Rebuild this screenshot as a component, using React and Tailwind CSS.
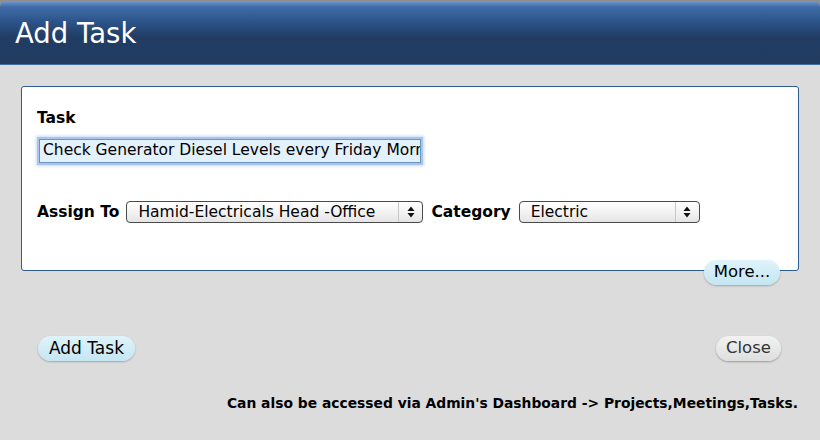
import React from 'react';

const Arrows = () => (
  <svg width="8" height="12" viewBox="0 0 8 12" className="block">
    <path d="M4 0.5 L7.5 5 L0.5 5 Z" fill="#111" />
    <path d="M4 11.5 L7.5 7 L0.5 7 Z" fill="#111" />
  </svg>
);

const FakeSelect = ({ value, width }) => (
  <div
    className={`flex items-center h-[22px] ${width} rounded-[4px] border border-[#4a4a4a] bg-[linear-gradient(#ffffff,#f3f3f3_50%,#e4e4e4)] text-[15.5px] text-black`}
  >
    <span className="flex-1 pl-[11px] leading-[20px] whitespace-nowrap overflow-hidden">{value}</span>
    <span className="flex items-center justify-center h-full w-[24px] border-l border-[#c8c8c8]">
      <Arrows />
    </span>
  </div>
);

export default function App() {
  return (
    <div className="w-[820px] h-[440px] bg-[#dcdcdc] font-['DejaVu_Sans',sans-serif] overflow-hidden">
      {/* Title bar */}
      <div className="bg-[#8f8f8f] pt-[1px]">
        <div className="h-[64px] rounded-t-[6px] border-b border-[#3e6da6] bg-[linear-gradient(#6f9ad2_0px,#3f6ba6_6px,#2c558b_20px,#223d64_36px,#213b61_64px)] flex items-center pl-[15px]">
          <h1 className="text-[27.5px] text-white leading-none pt-[3px]">Add Task</h1>
        </div>
      </div>

      {/* Form panel */}
      <div className="ml-[21px] mt-[21px] w-[778px] h-[185px] bg-white border border-[#2d5e93] rounded-[3px] pl-[15px] pt-[24px]">
        <div className="text-[15.5px] font-bold text-black leading-none">Task</div>
        <div className="mt-[12px] ml-[2px] w-[382px] h-[24px] border border-[#6b93c4] bg-[#e3f1fc] shadow-[0_0_0_2px_#a9c6ea,0_0_3px_3px_#c6daf2] flex items-center overflow-hidden">
          <input
            readOnly
            value="Check Generator Diesel Levels every Friday Morning"
            className="w-full bg-transparent outline-none text-[15.5px] text-black pl-[3px] leading-normal font-['DejaVu_Sans',sans-serif]"
          />
        </div>

        <div className="mt-[38px] flex items-center">
          <span className="text-[15.5px] font-bold text-black">Assign To</span>
          <span className="ml-[7px]">
            <FakeSelect value="Hamid-Electricals Head -Office" width="w-[297px]" />
          </span>
          <span className="text-[15.5px] font-bold text-black ml-[8px]">Category</span>
          <span className="ml-[8px]">
            <FakeSelect value="Electric" width="w-[181px]" />
          </span>
        </div>
      </div>

      {/* More button */}
      <div className="flex justify-end pr-[40px] -mt-[11px]">
        <button className="h-[25px] w-[76px] rounded-full bg-[linear-gradient(#dff3fa,#c4e6f2)] shadow-[0_1px_2px_rgba(0,0,0,0.25)] text-[16.5px] text-black leading-none">
          More...
        </button>
      </div>

      {/* Action buttons */}
      <div className="flex justify-between pl-[38px] pr-[39px] mt-[51px]">
        <button className="h-[25px] w-[97px] rounded-full bg-[linear-gradient(#dff3fa,#c4e6f2)] shadow-[0_1px_2px_rgba(0,0,0,0.25)] text-[17px] text-black leading-none">
          Add Task
        </button>
        <button className="h-[25px] w-[65px] rounded-full bg-[linear-gradient(#f2f2f2,#dedede)] shadow-[0_1px_2px_rgba(0,0,0,0.3)] text-[16.5px] text-[#333] leading-none">
          Close
        </button>
      </div>

      {/* Footer note */}
      <div className="flex justify-end pr-[22px] mt-[36px]">
        <p className="text-[13.85px] font-bold text-black leading-none">
          Can also be accessed via Admin's Dashboard -&gt; Projects,Meetings,Tasks.
        </p>
      </div>
    </div>
  );
}
